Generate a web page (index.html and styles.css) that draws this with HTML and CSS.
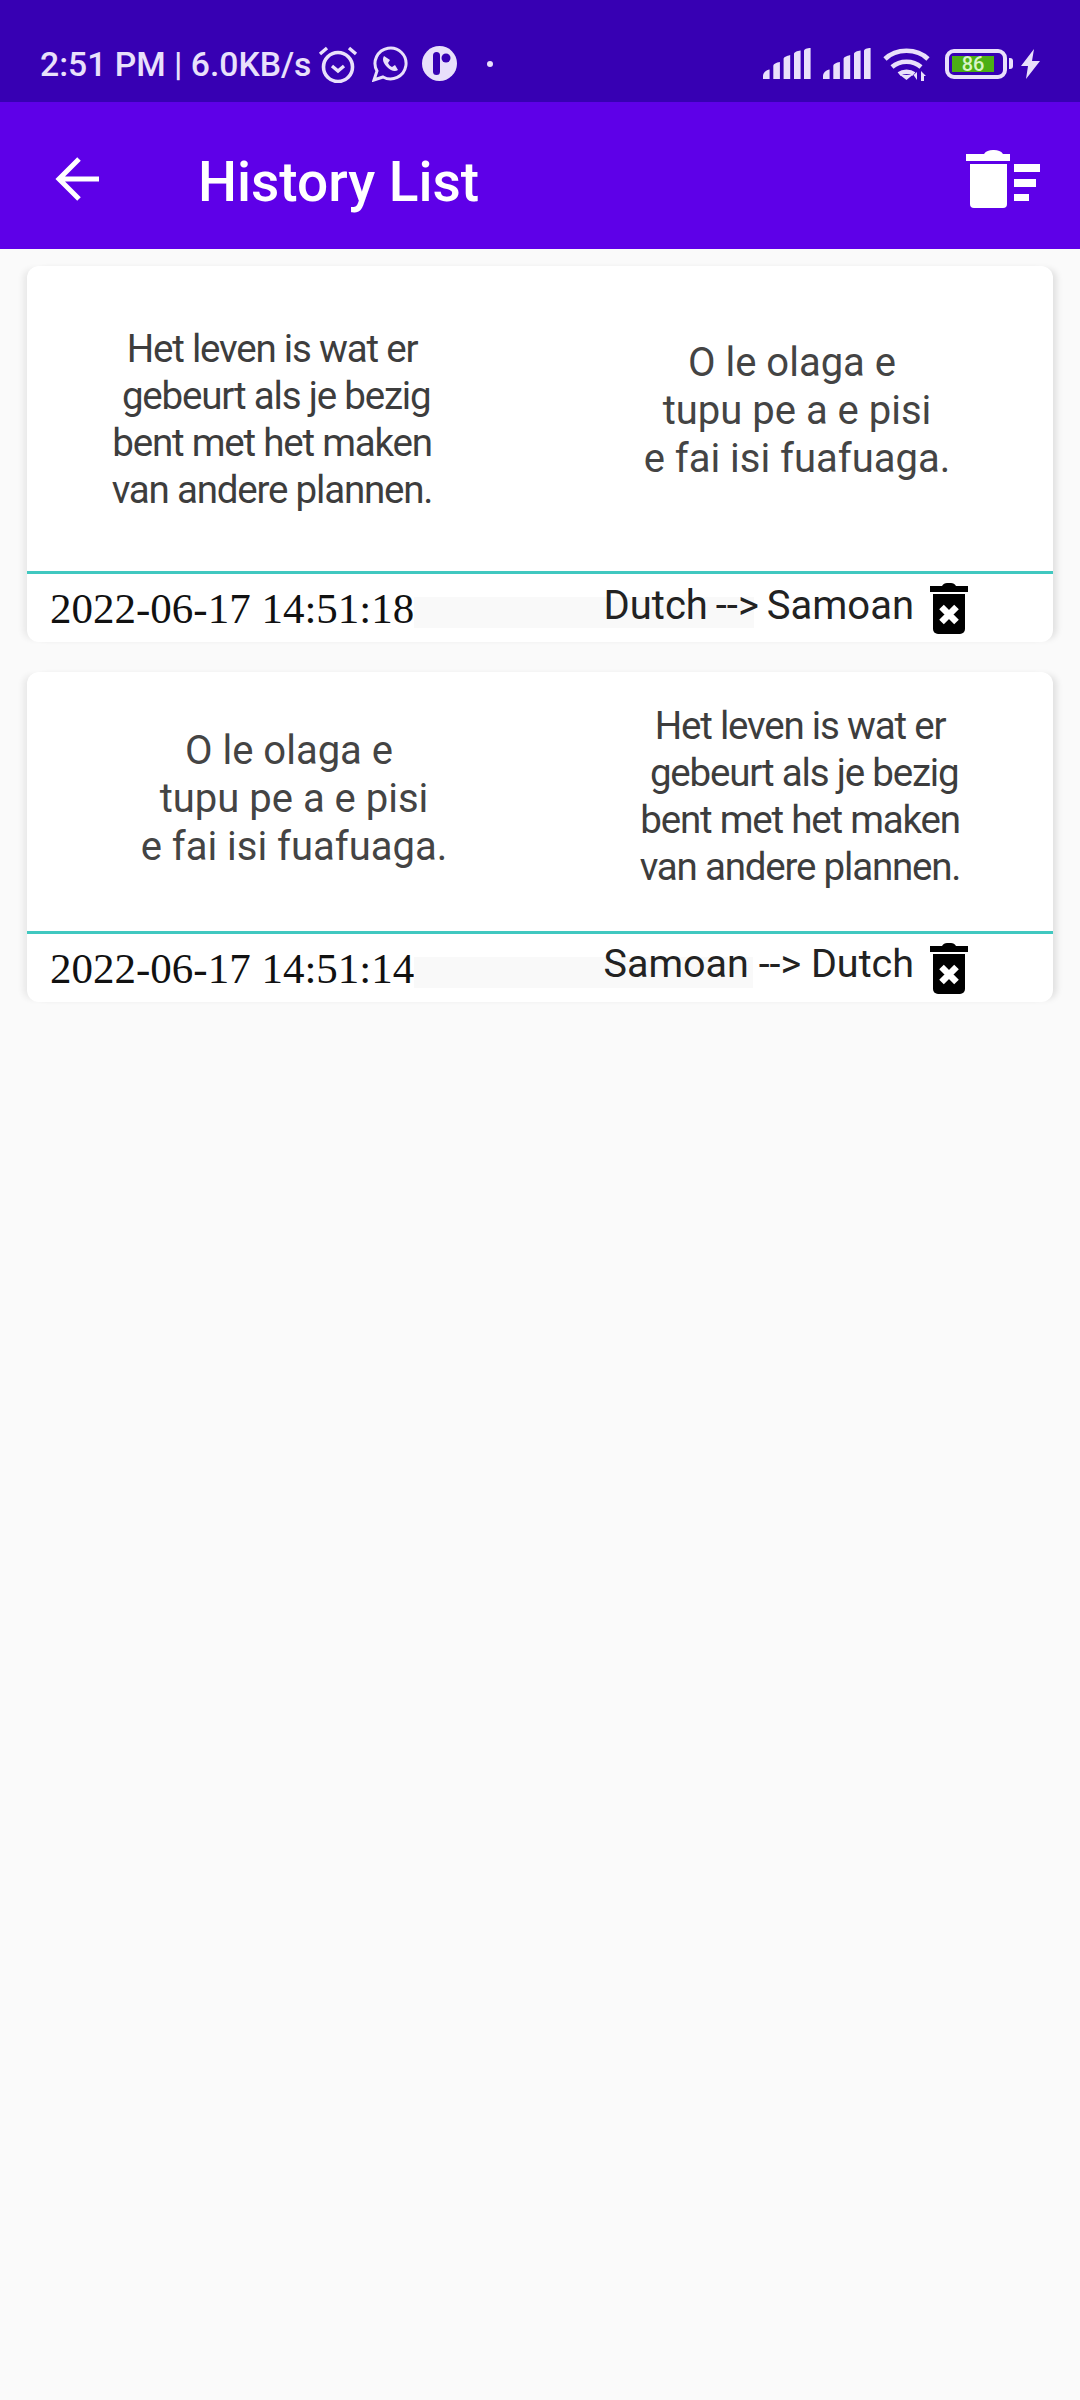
FILE: index.html
```html
<!DOCTYPE html>
<html lang="en">
<head>
  <meta charset="UTF-8">
  <meta name="viewport" content="width=device-width, initial-scale=1.0">
  <title>History List</title>
  <link rel="stylesheet" href="styles.css">
</head>
<body>
  <!-- status bar -->
  <div class="status-bar">
    <span class="status-text">2:51 PM | 6.0KB/s</span>
    <svg class="ic-alarm" viewBox="0 0 40 38"><circle cx="20" cy="22" r="14.500" fill="none" stroke="#e9e0fb" stroke-width="3.600"/><path d="M14 21l6 5 6-5" fill="none" stroke="#e9e0fb" stroke-width="3.400"/><path d="M2 9l7-6M38 9l-7-6" fill="none" stroke="#e9e0fb" stroke-width="3.400"/></svg>
    <svg class="ic-whatsapp" viewBox="0 0 36 36"><path d="M2 34l3-9A15.500 15.500 0 1 1 11 31z" fill="none" stroke="#e9e0fb" stroke-width="3"/><path d="M12 10c-2 3-1 7 3 11s8 5 11 3l-3-5-3 2c-2-1-3-2-4-4l2-3z" fill="#e9e0fb"/></svg>
    <svg class="ic-circle" viewBox="0 0 35 35"><circle cx="17.500" cy="17.500" r="17.500" fill="#e9e0fb"/><rect x="11" y="6" width="7" height="23" rx="3.500" fill="#3700b3"/><circle cx="24" cy="12" r="4.500" fill="#3700b3"/></svg>
    <span class="status-dot"></span>
    <span class="status-right">
      <svg class="ic-signal" viewBox="0 0 48 31"><path d="M0 31v-3c0-3 3-6 6.600-6.500V31zM10.300 31V18c0-2 3-3.500 6.600-4V31zM20.600 31V11c0-2 3-3 6.600-4V31zM31 31V6c0-2 3-3 6.600-3.500V31zM41 31V3c0-2 3-3 6.600-3V31z" fill="#e9e0fb"/></svg>
      <svg class="ic-signal" viewBox="0 0 48 31"><path d="M0 31v-3c0-3 3-6 6.600-6.500V31zM10.300 31V18c0-2 3-3.500 6.600-4V31zM20.600 31V11c0-2 3-3 6.600-4V31zM31 31V6c0-2 3-3 6.600-3.500V31zM41 31V3c0-2 3-3 6.600-3V31z" fill="#e9e0fb"/></svg>
      <svg class="ic-wifi" viewBox="0 0 47 34"><path d="M2 12C13 1 34 1 45 12M9 20c8-7 21-7 29 0M16 27c4-3 11-3 15 0" fill="none" stroke="#e9e0fb" stroke-width="4.600"/><path d="M17 28l6.500 5 6-5z" fill="#e9e0fb"/><path d="M34 33v-8l-3.500 3zM38 34V24l5 5h-2v5z" fill="#e9e0fb"/></svg>
      <span class="battery"><span class="battery-level">86</span></span>
      <span class="battery-nub"></span>
      <svg class="ic-bolt" viewBox="0 0 19 30"><path d="M13 0L0 17h7L5 30 19 12h-8z" fill="#e9e0fb"/></svg>
    </span>
  </div>

  <!-- app bar -->
  <div class="app-bar">
    <svg class="ic-back" viewBox="0 0 46 46"><path d="M44 23H5M24 3L4 23l20 20" fill="none" stroke="#fff" stroke-width="5"/></svg>
    <span class="app-title">History List</span>
    <svg class="ic-clear" viewBox="0 0 74 60"><path d="M0 5h18c2-3 5-4 9-4h1c4 0 7 1 9 4h7v7H0z" fill="#fff"/><path d="M4 15h37v40a4 4 0 0 1-4 4H8a4 4 0 0 1-4-4z" fill="#fff"/><path d="M48 15h26v8H48zM48 30h22v8H48zM48 45h15v7H48z" fill="#fff"/></svg>
  </div>

  <div class="list">
    <div class="card">
      <div class="texts texts-first">
        <p class="phrase small">Het leven is wat er<br>&nbsp;gebeurt als je bezig<br>bent met het maken<br>van andere plannen.</p>
        <p class="phrase raised">O le olaga e&nbsp;<br>tupu pe a e pisi<br>e fai isi fuafuaga.</p>
      </div>
      <div class="card-footer">
        <span class="date">2022-06-17 14:51:18</span>
        <span class="strip"></span>
        <span class="route">Dutch --&gt; Samoan</span>
        <svg class="ic-delete" viewBox="0 0 38 51"><path d="M0 3h12c1-2 3-3 5-3h4c2 0 4 1 5 3h12v6H0z" fill="#000"/><path d="M3 11h32v35a5 5 0 0 1-5 5H8a5 5 0 0 1-5-5z" fill="#000"/><path d="M11.500 24l15 15M26.500 24l-15 15" stroke="#fff" stroke-width="6.500"/></svg>
      </div>
    </div>

    <div class="card">
      <div class="texts texts-second">
        <p class="phrase">O le olaga e&nbsp;<br>tupu pe a e pisi<br>e fai isi fuafuaga.</p>
        <p class="phrase small">Het leven is wat er<br>&nbsp;gebeurt als je bezig<br>bent met het maken<br>van andere plannen.</p>
      </div>
      <div class="card-footer">
        <span class="date">2022-06-17 14:51:14</span>
        <span class="strip"></span>
        <span class="route route-up">Samoan --&gt; Dutch</span>
        <svg class="ic-delete" viewBox="0 0 38 51"><path d="M0 3h12c1-2 3-3 5-3h4c2 0 4 1 5 3h12v6H0z" fill="#000"/><path d="M3 11h32v35a5 5 0 0 1-5 5H8a5 5 0 0 1-5-5z" fill="#000"/><path d="M11.500 24l15 15M26.500 24l-15 15" stroke="#fff" stroke-width="6.500"/></svg>
      </div>
    </div>
  </div>
</body>
</html>
```

FILE: styles.css
```css
html, body {
  margin: 0;
  padding: 0;
}
body {
  width: 1080px;
  height: 2400px;
  overflow: hidden;
  background: #fafafa;
  font-family: Roboto, sans-serif;
}
p {
  margin: 0;
}
svg {
  display: block;
  flex: none;
}

/* status bar */
.status-bar {
  height: 102px;
  box-sizing: border-box;
  padding: 45px 40px 20px 40px;
  background: #3700b3;
  display: flex;
  align-items: center;
  color: #e9e0fb;
}
.status-text {
  font-size: 33.7px;
  font-weight: 500;
  white-space: nowrap;
  padding-top: 2px;
}
.ic-alarm {
  width: 40px;
  height: 38px;
  margin-left: 7px;
}
.ic-whatsapp {
  width: 36px;
  height: 36px;
  margin-left: 14px;
}
.ic-circle {
  width: 35px;
  height: 35px;
  margin-left: 14px;
}
.status-dot {
  width: 6px;
  height: 6px;
  border-radius: 50%;
  background: #e9e0fb;
  margin-left: 30px;
}
.status-right {
  margin-left: auto;
  display: flex;
  align-items: center;
}
.ic-signal {
  width: 48px;
  height: 31px;
  margin-right: 12px;
}
.ic-wifi {
  width: 47px;
  height: 34px;
}
.battery {
  width: 62px;
  height: 30px;
  box-sizing: border-box;
  border: 4px solid #e9e0fb;
  border-radius: 9px;
  margin-left: 15px;
  padding: 3px;
  display: flex;
}
.battery-level {
  width: 42px;
  background: #4caf14;
  color: #d9f5c8;
  font-size: 20px;
  font-weight: 500;
  line-height: 16px;
  text-align: center;
}
.battery-nub {
  width: 4px;
  height: 11px;
  border-radius: 0 3px 3px 0;
  background: #e9e0fb;
  margin-left: 2px;
}
.ic-bolt {
  width: 19px;
  height: 30px;
  margin-left: 8px;
}

/* app bar */
.app-bar {
  height: 147px;
  background: #5e00e8;
  display: flex;
  align-items: center;
  padding: 0 40px 0 55px;
  color: #fff;
}
.ic-back {
  width: 46px;
  height: 46px;
  margin-top: 6px;
}
.app-title {
  margin-left: 97px;
  padding-top: 12px;
  font-size: 55px;
  font-weight: 500;
}
.ic-clear {
  width: 74px;
  height: 60px;
  margin-left: auto;
  margin-top: 7px;
}

/* history cards */
.list {
  padding: 17px 27px 0 27px;
}
.card {
  background: #fff;
  border-radius: 12px;
  box-shadow: 7px 0 6px -3px rgba(0, 0, 0, 0.1), -7px 0 6px -3px rgba(0, 0, 0, 0.07);
  margin-bottom: 30px;
  overflow: hidden;
}
.texts {
  height: 305px;
  display: grid;
  align-items: center;
  border-bottom: 3px solid #40c8c0;
}
.texts-first {
  grid-template-columns: 490px 1fr;
}
.texts-first .raised {
  padding: 0 0 15px 24px;
}
.texts-second {
  height: 254px;
  padding-bottom: 5px;
  grid-template-columns: 534px 1fr;
}
.texts-second .small {
  padding: 0 14px 7px 0;
}
.phrase {
  text-align: center;
  font-size: 40px;
  line-height: 48px;
  color: #444;
}
.small {
  font-size: 38.5px;
  line-height: 47px;
  letter-spacing: -1.2px;
  color: #3d3d3d;
}
.card-footer {
  height: 68px;
  display: flex;
  align-items: center;
  padding-left: 23px;
}
.date {
  font-family: "Liberation Serif", serif;
  font-size: 43px;
  color: #111;
  white-space: nowrap;
}
.strip {
  flex: 1;
  height: 31px;
  margin: 9px -150px 0 0;
  background: #f9f9f9;
}
.route {
  font-size: 40px;
  color: #222;
  white-space: nowrap;
  word-spacing: -2px;
  margin-bottom: 5px;
}
.route-up {
  font-size: 39.5px;
  word-spacing: 0;
  margin-bottom: 10px;
}
.ic-delete {
  width: 38px;
  height: 51px;
  margin: 0 85px 0 16px;
}
```
